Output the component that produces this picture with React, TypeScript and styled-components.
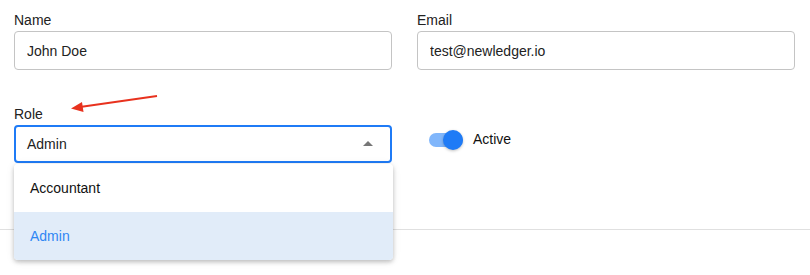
import React from 'react';
import styled, { createGlobalStyle } from 'styled-components';

const colors = {
  text: '#222222',
  border: '#c4c4c4',
  blue: '#1f7bf6',
  blueText: '#2f86f4',
  blueTrack: '#80b6fb',
  selected: '#e1ecf9',
  divider: '#e0e0e0',
  caret: '#767676',
  arrow: '#e8321e',
};

const GlobalStyle = createGlobalStyle`
  html, body {
    margin: 0;
    padding: 0;
    background: #ffffff;
    font-family: "Liberation Sans", Arial, sans-serif;
    color: ${colors.text};
  }
`;

const roles = ['Accountant', 'Admin'];

export default function App() {
  return (
    <Page>
      <GlobalStyle />
      <Form>
        <Field>
          <Label>Name</Label>
          <TextInput readOnly value="John Doe" />
        </Field>
        <Field>
          <Label>Email</Label>
          <TextInput readOnly value="test@newledger.io" />
        </Field>
        <Field>
          <Label>Role</Label>
          <SelectWrap>
            <SelectBox>
              <span>Admin</span>
              <Caret />
            </SelectBox>
            <Menu>
              {roles.map((role) => (
                <MenuItem key={role} selected={role === 'Admin'}>
                  {role}
                </MenuItem>
              ))}
            </Menu>
          </SelectWrap>
        </Field>
        <ToggleField>
          <Switch>
            <Track />
            <Thumb />
          </Switch>
          <ToggleLabel>Active</ToggleLabel>
        </ToggleField>
      </Form>
      <Divider />
      <Annotation width="100" height="24" viewBox="0 0 100 24">
        <line x1="97" y1="4" x2="20" y2="15" stroke={colors.arrow} strokeWidth="2" />
        <polygon points="11,16.5 22,10 23.5,20" fill={colors.arrow} />
      </Annotation>
    </Page>
  );
}

const Page = styled.div`
  position: relative;
  width: 810px;
  height: 275px;
  overflow: hidden;
`;

const Form = styled.div`
  display: grid;
  grid-template-columns: 378px 378px;
  column-gap: 25px;
  row-gap: 36px;
  padding: 12px 15px 0 14px;
`;

const Field = styled.div`
  display: flex;
  flex-direction: column;
`;

const Label = styled.label`
  font-size: 14px;
  line-height: 16px;
  margin-bottom: 3px;
  color: ${colors.text};
`;

const TextInput = styled.input`
  box-sizing: border-box;
  height: 39px;
  width: 100%;
  border: 1px solid ${colors.border};
  border-radius: 4px;
  padding: 0 12px;
  font-family: inherit;
  font-size: 14px;
  color: ${colors.text};
  outline: none;
  background: #fff;
`;

const SelectWrap = styled.div`
  position: relative;
`;

const SelectBox = styled.div`
  box-sizing: border-box;
  height: 38px;
  display: flex;
  align-items: center;
  justify-content: space-between;
  border: 2px solid ${colors.blue};
  border-radius: 4px;
  padding: 0 17px 0 11px;
  font-size: 14px;
  color: ${colors.text};
`;

const Caret = styled.span`
  width: 0;
  height: 0;
  border-left: 5px solid transparent;
  border-right: 5px solid transparent;
  border-bottom: 5px solid ${colors.caret};
  margin-top: -1px;
`;

const Menu = styled.div`
  position: absolute;
  top: calc(100% + 1px);
  left: 0;
  right: -1px;
  z-index: 2;
  background: #fff;
  border-radius: 4px;
  overflow: hidden;
  box-shadow: 0 2px 4px rgba(0, 0, 0, 0.22), 0 1px 10px rgba(0, 0, 0, 0.08);
`;

const MenuItem = styled.div<{ selected?: boolean }>`
  height: 48px;
  display: flex;
  align-items: center;
  padding: 0 16px;
  font-size: 14px;
  color: ${({ selected }) => (selected ? colors.blueText : '#111')};
  background: ${({ selected }) => (selected ? colors.selected : '#fff')};
`;

const ToggleField = styled.div`
  display: flex;
  align-items: center;
  padding: 24px 0 0 12px;
  align-self: start;
`;

const Switch = styled.div`
  position: relative;
  width: 34px;
  height: 20px;
`;

const Track = styled.div`
  position: absolute;
  left: 0;
  top: 3px;
  width: 34px;
  height: 14px;
  border-radius: 7px;
  background: ${colors.blueTrack};
`;

const Thumb = styled.div`
  position: absolute;
  right: 0;
  top: 0;
  width: 20px;
  height: 20px;
  border-radius: 50%;
  background: ${colors.blue};
  box-shadow: 0 1px 3px rgba(0, 0, 0, 0.25);
`;

const ToggleLabel = styled.span`
  margin-left: 10px;
  font-size: 14px;
  color: #111;
  margin-top: -3px;
`;

const Divider = styled.div`
  margin-top: 66px;
  height: 1px;
  background: ${colors.divider};
`;

const Annotation = styled.svg`
  position: absolute;
  left: 60px;
  top: 92px;
`;
